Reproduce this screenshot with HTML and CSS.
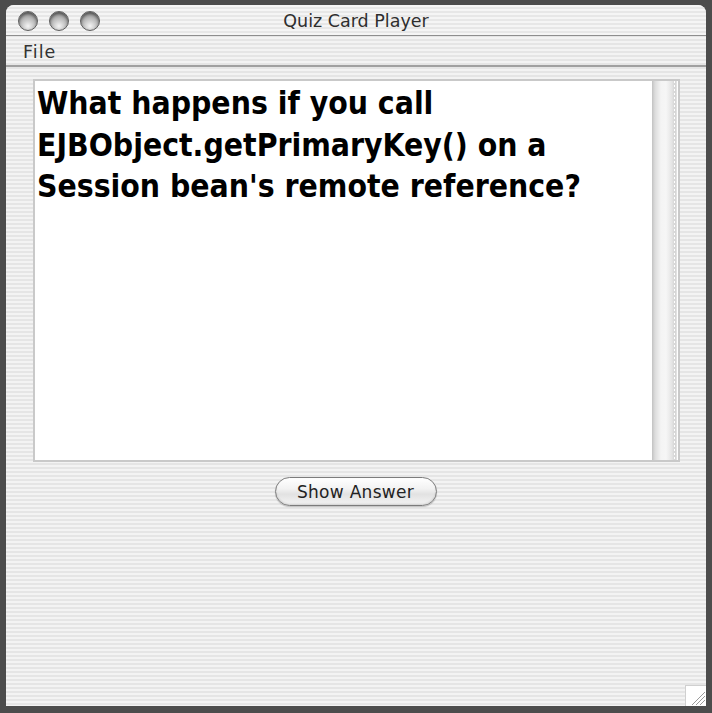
FILE: index.html
```html
<!DOCTYPE html>
<html>
<head>
<meta charset="utf-8">
<link rel="stylesheet" href="styles.css">
</head>
<body>
<div class="window">
  <div class="titlebar">
    <div class="lights">
      <span class="light"></span>
      <span class="light"></span>
      <span class="light"></span>
    </div>
    <div class="title">Quiz Card Player</div>
  </div>
  <div class="menubar"><span class="menu">File</span></div>
  <div class="content">
    <div class="textarea">
      <div class="text">What happens if you call EJBObject.getPrimaryKey() on a Session bean's remote reference?</div>
      <div class="scrollbar"></div>
    </div>
    <div class="btnrow"><button class="pill">Show Answer</button></div>
  </div>
  <div class="grip">
    <svg width="20" height="20" viewBox="0 0 20 20">
      <line x1="6" y1="19" x2="19" y2="6" stroke="#9a9a9a" stroke-width="1"/>
      <line x1="10" y1="19" x2="19" y2="10" stroke="#9a9a9a" stroke-width="1"/>
      <line x1="14" y1="19" x2="19" y2="14" stroke="#9a9a9a" stroke-width="1"/>
      <line x1="7" y1="19" x2="19" y2="7" stroke="#ffffff" stroke-width="1"/>
      <line x1="11" y1="19" x2="19" y2="11" stroke="#ffffff" stroke-width="1"/>
      <line x1="15" y1="19" x2="19" y2="15" stroke="#ffffff" stroke-width="1"/>
    </svg>
  </div>
</div>
</body>
</html>
```
FILE: styles.css
```css
html, body {
  margin: 0;
  padding: 0;
  width: 712px;
  height: 713px;
  background: #4c4c4c;
  overflow: hidden;
}
body {
  padding: 5px 6px 7px 6px;
  box-sizing: border-box;
  font-family: "DejaVu Sans", sans-serif;
}
.window {
  position: relative;
  height: 701px;
  border-radius: 8px 8px 0 0;
  overflow: hidden;
  display: flex;
  flex-direction: column;
  background: repeating-linear-gradient(to bottom, #f3f3f3 0 2px, #e5e5e5 2px 4px);
}
.titlebar {
  height: 30px;
  border-bottom: 1px solid #8e8e8e;
  position: relative;
  display: flex;
  align-items: center;
  justify-content: center;
  background: repeating-linear-gradient(to bottom, #f5f5f5 0 2px, #e7e7e7 2px 4px);
}
.lights {
  position: absolute;
  left: 12px;
  top: 6px;
  display: flex;
  gap: 11px;
}
.light {
  width: 20px;
  height: 20px;
  border-radius: 50%;
  box-sizing: border-box;
  border: 1px solid #5e5e5e;
  background: radial-gradient(circle at 50% 78%, #f4f4f4 0, #c0c0c0 42%, #7e7e7e 100%);
  box-shadow: inset 0 2px 3px rgba(0,0,0,0.45);
}
.title {
  font-size: 17.5px;
  color: #2e2e2e;
  margin-top: 1px;
}
.menubar {
  height: 29px;
  border-bottom: 2px solid #a0a0a0;
  display: flex;
  align-items: center;
  padding-left: 17px;
}
.menu {
  font-size: 17.5px;
  letter-spacing: 1px;
  color: #333;
  margin-top: 3px;
}
.content {
  flex: 1;
  display: flex;
  flex-direction: column;
  padding: 12px 26px 0 27px;
}
.textarea {
  height: 379px;
  border: 2px solid #c9c9c9;
  background: #fff;
  display: flex;
}
.text {
  flex: 1;
  padding: 2px 10px 0 2px;
  font-family: "DejaVu Sans Condensed", "DejaVu Sans", sans-serif;
  font-stretch: condensed;
  font-size: 31.6px;
  font-weight: bold;
  line-height: 41.5px;
  color: #000;
}
.scrollbar {
  width: 25px;
  margin-right: 1px;
  background: linear-gradient(to right, #c2c2c2 0, #dcdcdc 3px, #f4f4f4 9px, #f6f6f6 14px, #e4e4e4 20px, #d0d0d0 23px, #e8e8e8 25px);
  position: relative;
}
.scrollbar::after {
  content: "";
  position: absolute;
  right: 2px;
  top: 0;
  bottom: 0;
  width: 1px;
  background: repeating-linear-gradient(to bottom, #ffffff 0 2px, #d8d8d8 2px 4px);
}
.btnrow {
  display: flex;
  justify-content: center;
  padding-top: 15px;
  padding-right: 2px;
}
.pill {
  width: 162px;
  height: 29px;
  border-radius: 15px;
  border: 1px solid #7c7c7c;
  background: linear-gradient(to bottom, #ffffff 0, #f2f2f2 40%, #e2e2e2 60%, #f4f4f4 100%);
  box-shadow: inset 0 -1px 2px rgba(0,0,0,0.15), 0 1px 1px rgba(0,0,0,0.2);
  font-family: "DejaVu Sans", sans-serif;
  font-size: 17px;
  letter-spacing: 0.3px;
  color: #222;
  padding: 0;
}
.grip {
  position: absolute;
  right: 0;
  bottom: 0;
  width: 20px;
  height: 20px;
  background: #ffffff;
  border-left: 1px solid #d0d0d0;
  border-top: 1px solid #d0d0d0;
}
```
